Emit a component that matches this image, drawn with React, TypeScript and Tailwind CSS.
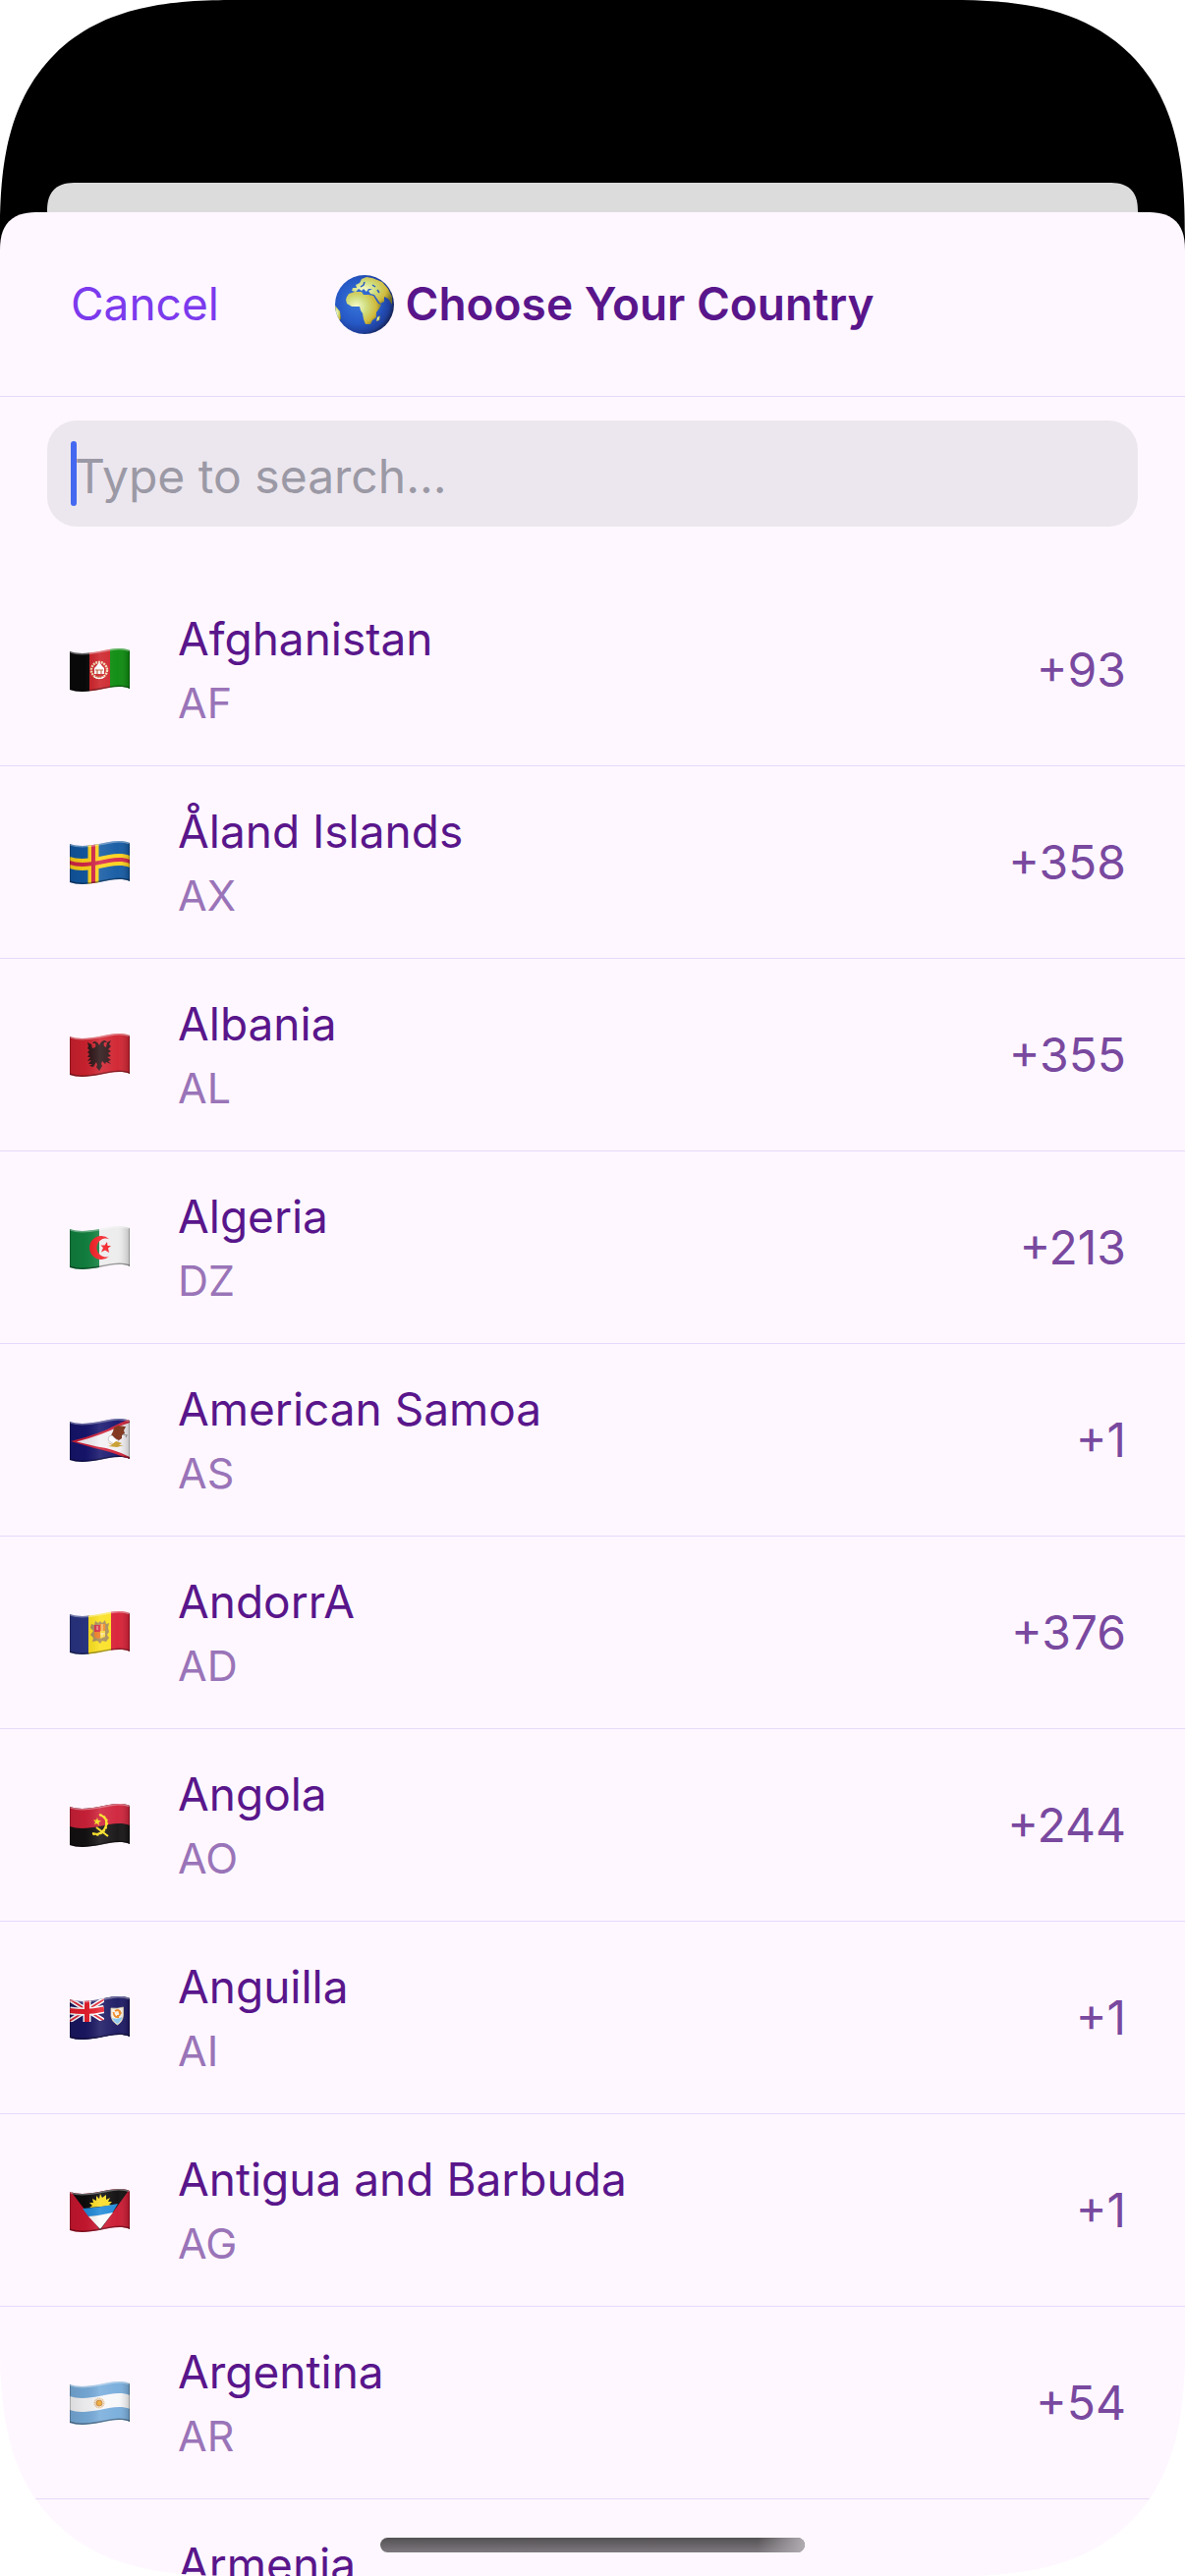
import { useId, type ReactNode } from 'react';

const FORWARD = 'c8 3 20 2 30 0s22 -5 31 -1';
const BACKWARD = 'c-9 -4 -21 -1 -31 1s-22 3 -30 0Z';

/** A horizontal stripe that follows the wave of the cloth. */
function Band({ from, to, fill }: { from: number; to: number; fill: string }) {
  return <path d={`M0 ${3 + from}${FORWARD}V${2 + to}${BACKWARD}`} fill={fill} />;
}

function Flag({ label, children }: { label: string; children: ReactNode }) {
  const id = useId();
  const outline = `M0 3${FORWARD}V41${BACKWARD}`;
  return (
    <svg role="img" aria-label={label} viewBox="0 0 61 44" className="w-[61px] shrink-0">
      <defs>
        <clipPath id={`${id}c`}>
          <path d={outline} />
        </clipPath>
        <linearGradient id={`${id}g`}>
          <stop offset="0" stopColor="#000" stopOpacity=".12" />
          <stop offset=".25" stopColor="#000" stopOpacity=".06" />
          <stop offset=".5" stopColor="#fff" stopOpacity=".12" />
          <stop offset=".8" stopColor="#fff" stopOpacity=".04" />
          <stop offset="1" stopColor="#000" stopOpacity=".2" />
        </linearGradient>
      </defs>
      <g clipPath={`url(#${id}c)`}>
        {children}
        <path d={outline} fill={`url(#${id}g)`} />
        <path d={`M0 3${FORWARD}`} fill="none" stroke="#fff" strokeOpacity=".35" strokeWidth="3" />
        <path d={`M61 41${BACKWARD.replace('Z', '')}`} fill="none" stroke="#000" strokeOpacity=".35" strokeWidth="3" />
        <path d="M0 0V44M61 0V44" stroke="#000" strokeOpacity=".3" strokeWidth="1.5" />
      </g>
    </svg>
  );
}

const afghanistan = (
  <>
    <path d="M0 0H20V44H0Z" fill="#0a0a0a" />
    <path d="M20 0H41V44H20Z" fill="#cc2027" />
    <path d="M41 0H61V44H41Z" fill="#0a8a0c" />
    <circle cx="30" cy="22" r="8" fill="none" stroke="#f3d9b0" strokeWidth="2.4" strokeDasharray="2 .8" />
    <path d="M25 26V20L27 18L30 14L33 18L35 20V26Z" fill="#fff" />
    <path d="M28 26V22H32V26M26 22H34M27 29H33" fill="none" stroke="#b8552e" strokeWidth="1.1" />
    <path d="M25 29Q30 32 35 29" fill="none" stroke="#fff" strokeWidth="1.2" />
  </>
);

const aland = (
  <>
    <path d="M0 0H61V44H0Z" fill="#1259a3" />
    <path d="M18.5 0H29.5V44H18.5Z" fill="#ffd21a" />
    <Band from={13} to={25} fill="#ffd21a" />
    <path d="M22 0H26V44H22Z" fill="#d5264a" />
    <Band from={17} to={21} fill="#d5264a" />
  </>
);

const albania = (
  <>
    <path d="M0 0H61V44H0Z" fill="#d0222f" />
    <path
      d="M30 12Q28 8 25 8L23 10L26 10Q27 12 26 14L23 15L22 11L18 9L19 13L18 15L20 17L18 19L20 21L18 24L21 24L18 28L22 27L19 31L23 31L20 33L24 34L27 29L28 32L27 34L30 38L33 33L32 31L33 28L36 31L37 29L42 31L39 28L42 27L38 24L42 23L39 20L42 18L39 16L42 13L40 11L42 7L38 9L37 14L35 13Q34 11 35 9L38 9L36 7Q32 7 30 12Z"
      fill="#2c1416"
    />
  </>
);

const algeria = (
  <>
    <path d="M0 0H30V44H0Z" fill="#118340" />
    <path d="M30 0H61V44H30Z" fill="#ececec" />
    <path d="M40 13A12 12 0 1 0 40 31A9.5 9.5 0 1 1 40 13Z" fill="#f31b22" />
    <path d="M38 16L38.5 20L42 20L39 22.5L40 27L36 24.5L32 26.5L34 22L31.5 19.5L35.5 19.5Z" fill="#f31b22" />
  </>
);

const samoa = (
  <>
    <path d="M0 0H61V44H0Z" fill="#16156e" />
    <path d="M1 23Q30 16 48 6L61 0V42Q45 34 25 30Z" fill="#cf2038" />
    <path d="M7 23.5Q32 17 50 8L61 4V39Q46 31 28 28.5Z" fill="#f2f0f3" />
    <path d="M45 9L49 7L57 8L55 12L56 15L53 17L53 20L50 22L45 20L42 17L44 13Z" fill="#7d3014" />
    <path d="M40 18L43 17L46 20L50 23L45 26L39 22Z" fill="#fff" stroke="#b9b0b4" strokeWidth=".7" />
    <path d="M38 24L43 26L47 23L53 25L50 27L55 27L48 29L39 28L43 27Z" fill="#c79d2c" />
    <path d="M54 16L58 17L57 19" fill="none" stroke="#999" strokeWidth="1.2" />
  </>
);

const andorra = (
  <>
    <path d="M0 0H20V44H0Z" fill="#2a3585" />
    <path d="M19 0H42V44H19Z" fill="#fbe01c" />
    <path d="M42 0H61V44H42Z" fill="#d81f35" />
    <path
      d="M22 13L25 14L26 10L29 12L31 10L33 12L36 9L37 13L40 12L39 17L40 21L38 24L40 27L37 31L33 30L31 33L28 30L23 31L24 27L21 24L24 20L21 17Z"
      fill="#a98b56"
    />
    <path d="M25 14H31V21H25Z" fill="#d62c44" />
    <path d="M31 13H36V20H31Z" fill="#ef8a1d" />
    <path d="M25 21H31V27L29 28L25 26Z" fill="#ee7d20" />
    <path d="M31 20H36V26L31 28Z" fill="#f8d53a" />
    <path d="M28 15V19M33 13V20M31 23H36M33 22V26" stroke="#fff1c9" strokeWidth=".8" />
  </>
);

const angola = (
  <>
    <path d="M0 0H61V44H0Z" fill="#141112" />
    <Band from={-6} to={20} fill="#cf2139" />
    <path d="M30 11Q39 14 37 22Q35 29 28 31L23 30" fill="none" stroke="#f9e11e" strokeWidth="2.2" />
    <path d="M31 11Q40 14 38 22Q36 30 28 32L23 31" fill="none" stroke="#f9e11e" strokeWidth="1.5" strokeDasharray="2 2" />
    <path d="M27 24L39 33" stroke="#f9e11e" strokeWidth="2" />
    <path d="M28 14L29 17L32 17L29.5 19L30 22L27.5 20L25 21L26 18.5L24 16.5L27 16.5Z" fill="#f9e11e" />
  </>
);

const anguilla = (
  <>
    <path d="M0 0H61V44H0Z" fill="#1b1763" />
    <path d="M0 3L35 25M35 3L0 25" stroke="#fff" strokeWidth="5" />
    <path d="M0 3L35 25M35 3L0 25" stroke="#e22335" strokeWidth="1.8" />
    <path d="M17.5 2V26M0 14.5Q18 17 35 13" fill="none" stroke="#fff" strokeWidth="8" />
    <path d="M17.5 2V26M0 14.5Q18 17 35 13" fill="none" stroke="#e91e2c" strokeWidth="5" />
    <path d="M35 0H61V44H0V26Q20 28 35 24Z" fill="#1b1763" />
    <path d="M42 12Q48 13 54.5 11V19Q54 26 48.5 29Q43 26 42 20Z" fill="#f7f1e4" stroke="#d7cba8" strokeWidth=".8" />
    <path d="M43 22Q48 24 53.5 21Q52 26 48.5 28Q45 26 43 22Z" fill="#89c5ee" />
    <path d="M46 15Q51 12 52 18M44.5 16Q45 22 50 21M50 15Q53 20 48 20" fill="none" stroke="#ee8822" strokeWidth="1.8" />
  </>
);

const antigua = (
  <>
    <path d="M0 0H61V44H0Z" fill="#cb1730" />
    <path d="M0 1L61 0L31 42Z" fill="#0d0b0c" />
    <path
      d="M20 19L23 17L20 14L24 14L23 10L27 12L27 7L30 10L31 5L33 9L37 6L37 11L41 9L39 13L43 13L40 16L43 17Z"
      fill="#fbdc20"
    />
    <path d="M13 20Q30 19 49 15L43 25Q30 28 19 28Z" fill="#1f8ad8" />
    <path d="M19 28Q31 27 44 24L31 41Z" fill="#fafafa" />
  </>
);

const argentina = (
  <>
    <path d="M0 0H61V44H0Z" fill="#78addc" />
    <Band from={12} to={26} fill="#f8f8fa" />
    <circle cx="30" cy="22" r="4.5" fill="none" stroke="#dba55c" strokeOpacity=".65" strokeWidth="2" strokeDasharray="1.2 .5" />
    <circle cx="30" cy="22" r="3" fill="#eda52c" stroke="#b5722c" strokeWidth=".8" />
  </>
);

const armenia = (
  <>
    <path d="M0 0H61V44H0Z" fill="#d90012" />
    <Band from={13} to={26} fill="#0033a0" />
    <Band from={26} to={44} fill="#f2a800" />
  </>
);

const countries = [
  { name: 'Afghanistan', code: 'AF', dial: '+93', flag: afghanistan },
  { name: 'Åland Islands', code: 'AX', dial: '+358', flag: aland },
  { name: 'Albania', code: 'AL', dial: '+355', flag: albania },
  { name: 'Algeria', code: 'DZ', dial: '+213', flag: algeria },
  { name: 'American Samoa', code: 'AS', dial: '+1', flag: samoa },
  { name: 'AndorrA', code: 'AD', dial: '+376', flag: andorra },
  { name: 'Angola', code: 'AO', dial: '+244', flag: angola },
  { name: 'Anguilla', code: 'AI', dial: '+1', flag: anguilla },
  { name: 'Antigua and Barbuda', code: 'AG', dial: '+1', flag: antigua },
  { name: 'Argentina', code: 'AR', dial: '+54', flag: argentina },
  { name: 'Armenia', code: 'AM', dial: '+374', flag: armenia },
];

function Globe() {
  return (
    <svg aria-hidden="true" viewBox="0 0 60 60" className="w-[60px] shrink-0">
      <defs>
        <radialGradient id="ocean" cx=".4" cy=".45" r=".62">
          <stop offset="0" stopColor="#3a78dc" />
          <stop offset=".6" stopColor="#2659c6" />
          <stop offset=".85" stopColor="#1f3f9c" />
          <stop offset="1" stopColor="#15204c" />
        </radialGradient>
        <radialGradient id="land" cx=".3" cy=".45" r=".75">
          <stop offset="0" stopColor="#f6fbcb" />
          <stop offset=".4" stopColor="#cfdc7c" />
          <stop offset=".75" stopColor="#d0b93c" />
          <stop offset="1" stopColor="#6d6a25" />
        </radialGradient>
        <clipPath id="disc">
          <circle cx="30" cy="30" r="30" />
        </clipPath>
      </defs>
      <g clipPath="url(#disc)">
        <path d="M0 0H60V60H0Z" fill="url(#ocean)" />
        <g fill="url(#land)">
          <path d="M12 22L14 19L20 17L27 17L29 20L34 20L39 21L42 26L44 29L47 30L45 34L42 38L42 43L38 46L36 50L31 50L29 45L28 39L26 36L25 32L17 32L12 29L11 25Z" />
          <path d="M17 16L18 13L22 13L21 10L25 8L27 4L32 2L38 3L48 7L54 14L58 22L58 30L54 24L50 22L50 27L46 29L42 23L40 20L36 19L34 16L38 14L34 14L32 17L29 14L27 16L24 14L21 17Z" />
          <path d="M43 43L46 41L45 46L42 47Z" />
          <path d="M0 31L5 37L6 44L4 48L0 43Z" />
        </g>
        <path d="M26 12L29 10L30 7M38 10L41 12M43 15L45 18" fill="none" stroke="#2a5cc0" strokeWidth="1.5" />
      </g>
    </svg>
  );
}

export default function App() {
  return (
    <div className="h-screen bg-white">
      <main className="relative flex h-full flex-col overflow-hidden rounded-[186px] bg-[linear-gradient(#000_300px,#fef7ff_300px)] pt-[186px] font-['Inter','Liberation_Sans',sans-serif] text-[46px] text-purple-900 [corner-shape:superellipse(1.4)] supports-[corner-shape:squircle]:rounded-[240px]">
        <div className="mx-12 h-[30px] shrink-0 rounded-t-[28px] bg-[#dcdcdc] [corner-shape:superellipse(1.4)] supports-[corner-shape:squircle]:rounded-t-[36px]" />
        <section className="min-h-0 flex-1 overflow-hidden rounded-t-[32px] bg-[#fef7ff] [corner-shape:superellipse(1.4)] supports-[corner-shape:squircle]:rounded-t-[40px]">
          <header className="grid h-[188px] grid-cols-[1fr_auto_1fr] items-center border-b border-[#e5dbf8] px-[72px]">
            <button type="button" className="justify-self-start text-[#7c3aed]">
              Cancel
            </button>
            <h1 className="flex items-center gap-3 pl-6 font-semibold">
              <Globe />
              Choose Your Country
            </h1>
          </header>
          <div className="relative mx-12 mt-6">
            <input
              type="text"
              aria-label="Search countries"
              placeholder="Type to search..."
              className="h-[108px] w-full rounded-[30px] bg-[#ece7ee] px-7 pt-1 text-5xl outline-none placeholder:text-[#9b99a5]"
            />
            <span className="absolute top-[21px] left-6 h-[66px] w-[6px] rounded-full bg-[#4469f0]" />
          </div>
          <ul className="mt-12">
            {countries.map((country) => (
              <li key={country.code} className="border-b border-[#e6dafa]">
                <button type="button" className="flex h-[195px] w-full items-center pr-[60px] pl-[71px] text-left">
                  <Flag label={`Flag of ${country.name}`}>{country.flag}</Flag>
                  <span className="flex flex-1 flex-col pb-1 pl-[49px]">
                    <span className="leading-[70px]">{country.name}</span>
                    <span className="text-[43px] leading-[60px] text-[#9a74b8]">{country.code}</span>
                  </span>
                  <span className="text-5xl text-[#79499f]">{country.dial}</span>
                </button>
              </li>
            ))}
          </ul>
        </section>
        <div className="absolute bottom-6 left-1/2 h-[15px] w-[432px] -translate-x-1/2 overflow-hidden rounded-lg bg-linear-to-b from-[#545154] to-[#7d797e]">
          <div className="ml-auto h-full w-12 bg-linear-to-r from-transparent to-[#b0acb1]" />
        </div>
      </main>
    </div>
  );
}
